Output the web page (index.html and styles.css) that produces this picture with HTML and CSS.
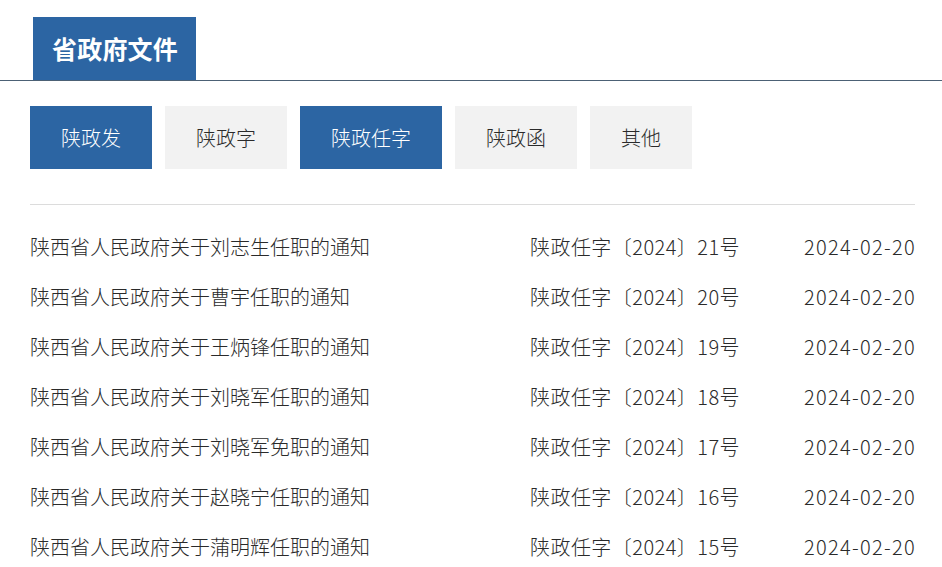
FILE: index.html
```html
<!DOCTYPE html>
<html lang="zh-CN">
<head>
<meta charset="utf-8">
<title>省政府文件</title>
<link rel="stylesheet" href="styles.css">
</head>
<body>
<div class="page">
  <div class="head">
    <div class="head-tab">省政府文件</div>
  </div>
  <div class="content">
    <div class="tabs">
      <div class="tab active w122">陕政发</div>
      <div class="tab w122">陕政字</div>
      <div class="tab active w142">陕政任字</div>
      <div class="tab w122">陕政函</div>
      <div class="tab w102">其他</div>
    </div>
    <div class="sep"></div>
    <ul class="list">
      <li class="row"><span class="title">陕西省人民政府关于刘志生任职的通知</span><span class="num">陕政任字〔2024〕21号</span><span class="date">2024-02-20</span></li>
      <li class="row"><span class="title">陕西省人民政府关于曹宇任职的通知</span><span class="num">陕政任字〔2024〕20号</span><span class="date">2024-02-20</span></li>
      <li class="row"><span class="title">陕西省人民政府关于王炳锋任职的通知</span><span class="num">陕政任字〔2024〕19号</span><span class="date">2024-02-20</span></li>
      <li class="row"><span class="title">陕西省人民政府关于刘晓军任职的通知</span><span class="num">陕政任字〔2024〕18号</span><span class="date">2024-02-20</span></li>
      <li class="row"><span class="title">陕西省人民政府关于刘晓军免职的通知</span><span class="num">陕政任字〔2024〕17号</span><span class="date">2024-02-20</span></li>
      <li class="row"><span class="title">陕西省人民政府关于赵晓宁任职的通知</span><span class="num">陕政任字〔2024〕16号</span><span class="date">2024-02-20</span></li>
      <li class="row"><span class="title">陕西省人民政府关于蒲明辉任职的通知</span><span class="num">陕政任字〔2024〕15号</span><span class="date">2024-02-20</span></li>
    </ul>
  </div>
</div>
</body>
</html>
```
FILE: styles.css
```css
html, body {
  margin: 0;
  padding: 0;
  background: #fff;
}
body {
  font-family: "Noto Sans CJK SC", "Noto Sans", sans-serif;
  color: #333;
}
.page {
  width: 942px;
  height: 567px;
  overflow: hidden;
}
.head {
  padding-top: 17px;
  padding-left: 33px;
  border-bottom: 1px solid #4c6175;
  display: flex;
}
.head-tab {
  width: 163px;
  height: 63px;
  box-sizing: border-box;
  padding-left: 19px;
  background: #2c65a3;
  color: #fff;
  font-size: 25px;
  font-weight: bold;
  line-height: 63px;
  letter-spacing: 0.2px;
}
.content {
  padding: 25px 27px 0 30px;
}
.tabs {
  display: flex;
  gap: 13px;
}
.tab {
  height: 63px;
  line-height: 63px;
  text-align: center;
  font-size: 20px;
  font-weight: 300;
  background: #f2f2f2;
  color: #2a2a2a;
}
.tab.active {
  background: #2c65a3;
  color: #fff;
}
.w122 { width: 122px; }
.w142 { width: 142px; }
.w102 { width: 102px; }
.sep {
  margin-top: 35px;
  height: 1px;
  background: #dcdcdc;
}
.list {
  list-style: none;
  margin: 17px 0 0;
  padding: 0;
}
.row {
  display: flex;
  height: 50px;
  line-height: 50px;
  font-size: 20px;
  font-weight: 300;
  color: #2a2a2a;
}
.title {
  width: 500px;
}
.num {
  flex: 1;
  letter-spacing: 0.45px;
}
.date {
  text-align: right;
  letter-spacing: 1.3px;
  margin-right: -1px;
}
```
